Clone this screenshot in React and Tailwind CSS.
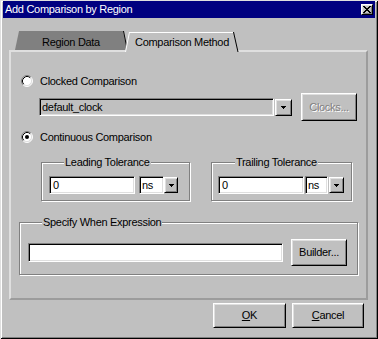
const raised =
  'border border-t-white border-l-white border-r-black border-b-black shadow-[inset_1px_1px_0_#dfdfdf,inset_-1px_-1px_0_#808080]';
const sunken =
  'border border-t-[#808080] border-l-[#808080] border-r-white border-b-white shadow-[inset_1px_1px_0_#000,inset_-1px_-1px_0_#dfdfdf]';
const etched = 'relative border border-[#808080] shadow-[1px_1px_0_#fff,inset_1px_1px_0_#fff]';

function Arrow() {
  return (
    <svg width="5" height="3" viewBox="0 0 5 3" shapeRendering="crispEdges">
      <path d="M0 0h5v1H4v1H3v1H2V2H1V1H0z" fill="#000" />
    </svg>
  );
}

function DropButton({ className }) {
  return (
    <div className={`${raised} flex items-center justify-center ${className}`}>
      <Arrow />
    </div>
  );
}

function Radio({ checked }) {
  return (
    <svg width="12" height="12" viewBox="0 0 12 12">
      <circle cx="6" cy="6" r="5" fill="#fff" />
      <path d="M2.11 9.89A5.5 5.5 0 0 1 9.89 2.11" stroke="#808080" fill="none" />
      <path d="M9.89 2.11A5.5 5.5 0 0 1 2.11 9.89" stroke="#fff" fill="none" />
      <path d="M2.82 9.18A4.5 4.5 0 0 1 9.18 2.82" stroke="#000" fill="none" />
      <path d="M9.18 2.82A4.5 4.5 0 0 1 2.82 9.18" stroke="#dfdfdf" fill="none" />
      {checked && <circle cx="6" cy="6" r="2" fill="#000" />}
    </svg>
  );
}

function Tolerance({ label, width, pad, gap, unitW, btnW, labelLeft }) {
  return (
    <div className={`${etched} h-[39px] ${width}`}>
      <span className={`absolute -top-[8px] ${labelLeft} bg-[#c0c0c0] px-[1px] leading-[14px]`}>{label}</span>
      <div className={`flex items-center pt-[13px] ${pad}`}>
        <div className={`${sunken} bg-white w-[86px] h-[18px] pl-[3px] leading-[16px]`}>0</div>
        <div className={`${sunken} bg-white ${gap} ${unitW} h-[18px] pl-[2px] leading-[16px]`}>ns</div>
        <DropButton className={`${btnW} h-[16px]`} />
      </div>
    </div>
  );
}

export default function App() {
  return (
    <div className="w-[378px] h-[339px] bg-[#c0c0c0] pt-[1px] px-[3px] text-[11px] tracking-[-0.3px] text-black font-['Liberation_Sans',Arial,sans-serif] shadow-[inset_1px_1px_0_#dfdfdf,inset_-1px_-1px_0_#000,inset_2px_2px_0_#fff,inset_-2px_-2px_0_#808080]">
      {/* title bar */}
      <div className="h-[17px] bg-[#000080] flex items-center justify-between pl-[2px] pr-[2px]">
        <span className="text-white leading-none">Add Comparison by Region</span>
        <div className={`${raised} w-[12px] h-[11px] flex items-center justify-center bg-[#c0c0c0]`}>
          <svg width="8" height="7" viewBox="0 0 8 7" shapeRendering="crispEdges">
            <path d="M0 0h2l2 2.5L6 0h2L5 3.5 8 7H6L4 4.5 2 7H0l3-3.5z" fill="#000" />
          </svg>
        </div>
      </div>

      {/* tabs */}
      <div className="relative z-10 flex h-[21px] mt-[13px] ml-[11px]">
        <div className="relative w-[114px] h-[21px] flex items-center justify-center">
          <svg className="absolute inset-0" width="114" height="21" viewBox="0 0 114 21">
            <polygon points="1,19 5,0 109,0 113,19" fill="#808080" />
            <path d="M109.5 0L112.5 15" stroke="#000" fill="none" />
          </svg>
          <span className="relative pt-[1px]">Region Data</span>
        </div>
        <div className="relative -ml-[4px] w-[116px] h-[21px] flex items-center justify-center">
          <svg className="absolute inset-0" width="116" height="21" viewBox="0 0 116 21">
            <polygon points="1,21 5,1 109,1 114,21" fill="#c0c0c0" />
            <path d="M5 1.5H109" stroke="#fff" fill="none" />
            <path d="M5.5 1L1.5 21" stroke="#fff" fill="none" />
            <path d="M109.5 1L114 21" stroke="#000" fill="none" />
          </svg>
          <span className="relative pt-[2px]">Comparison Method</span>
        </div>
      </div>

      {/* panel */}
      <div className="-mt-[2px] ml-[6px] w-[359px] h-[250px] border-2 border-t-[#dfdfdf] border-l-[#dfdfdf] border-r-[#9c9c9c] border-b-[#9c9c9c] flex flex-col pt-[23px]">
        <div className="flex items-center ml-[10px] h-[12px]">
          <Radio />
          <span className="ml-[7px]">Clocked Comparison</span>
        </div>

        <div className="flex items-center mt-[6px] ml-[28px] h-[28px]">
          <div className={`${sunken} w-[235px] h-[18px] pl-[2px] leading-[16px]`}>default_clock</div>
          <DropButton className="ml-[1px] w-[17px] h-[17px]" />
          <div className={`${raised} ml-[9px] w-[56px] h-[28px] flex items-center justify-center text-[#808080] [text-shadow:1px_1px_0_#fff]`}>
            Clocks...
          </div>
        </div>

        <div className="flex items-center mt-[10px] ml-[10px] h-[12px]">
          <Radio checked />
          <span className="ml-[7px]">Continuous Comparison</span>
        </div>

        <div className="flex mt-[19px] ml-[30px] gap-[21px]">
          <Tolerance
            label="Leading Tolerance"
            width="w-[149px]"
            pad="pl-[7px]"
            gap="ml-[4px]"
            unitW="w-[25px]"
            btnW="w-[14px]"
            labelLeft="left-[22px]"
          />
          <Tolerance
            label="Trailing Tolerance"
            width="w-[141px]"
            pad="pl-[6px]"
            gap="ml-[1px]"
            unitW="w-[23px]"
            btnW="ml-[1px] w-[15px]"
            labelLeft="left-[23px]"
          />
        </div>

        <div className={`${etched} mt-[21px] ml-[8px] w-[339px] h-[53px]`}>
          <span className="absolute -top-[8px] left-[22px] bg-[#c0c0c0] px-[1px] leading-[14px]">Specify When Expression</span>
          <div className="flex items-center pt-[16px] pl-[8px]">
            <div className={`${sunken} bg-white w-[255px] h-[19px]`} />
            <div className={`${raised} ml-[8px] w-[56px] h-[27px] flex items-center justify-center`}>Builder...</div>
          </div>
        </div>
      </div>

      {/* dialog buttons */}
      <div className="flex justify-end gap-[6px] mt-[3px] pr-[11px]">
        <div className={`${raised} w-[73px] h-[25px] flex items-center justify-center`}>
          <span><span className="underline">O</span>K</span>
        </div>
        <div className={`${raised} w-[72px] h-[25px] flex items-center justify-center`}>
          <span><span className="underline">C</span>ancel</span>
        </div>
      </div>
    </div>
  );
}
